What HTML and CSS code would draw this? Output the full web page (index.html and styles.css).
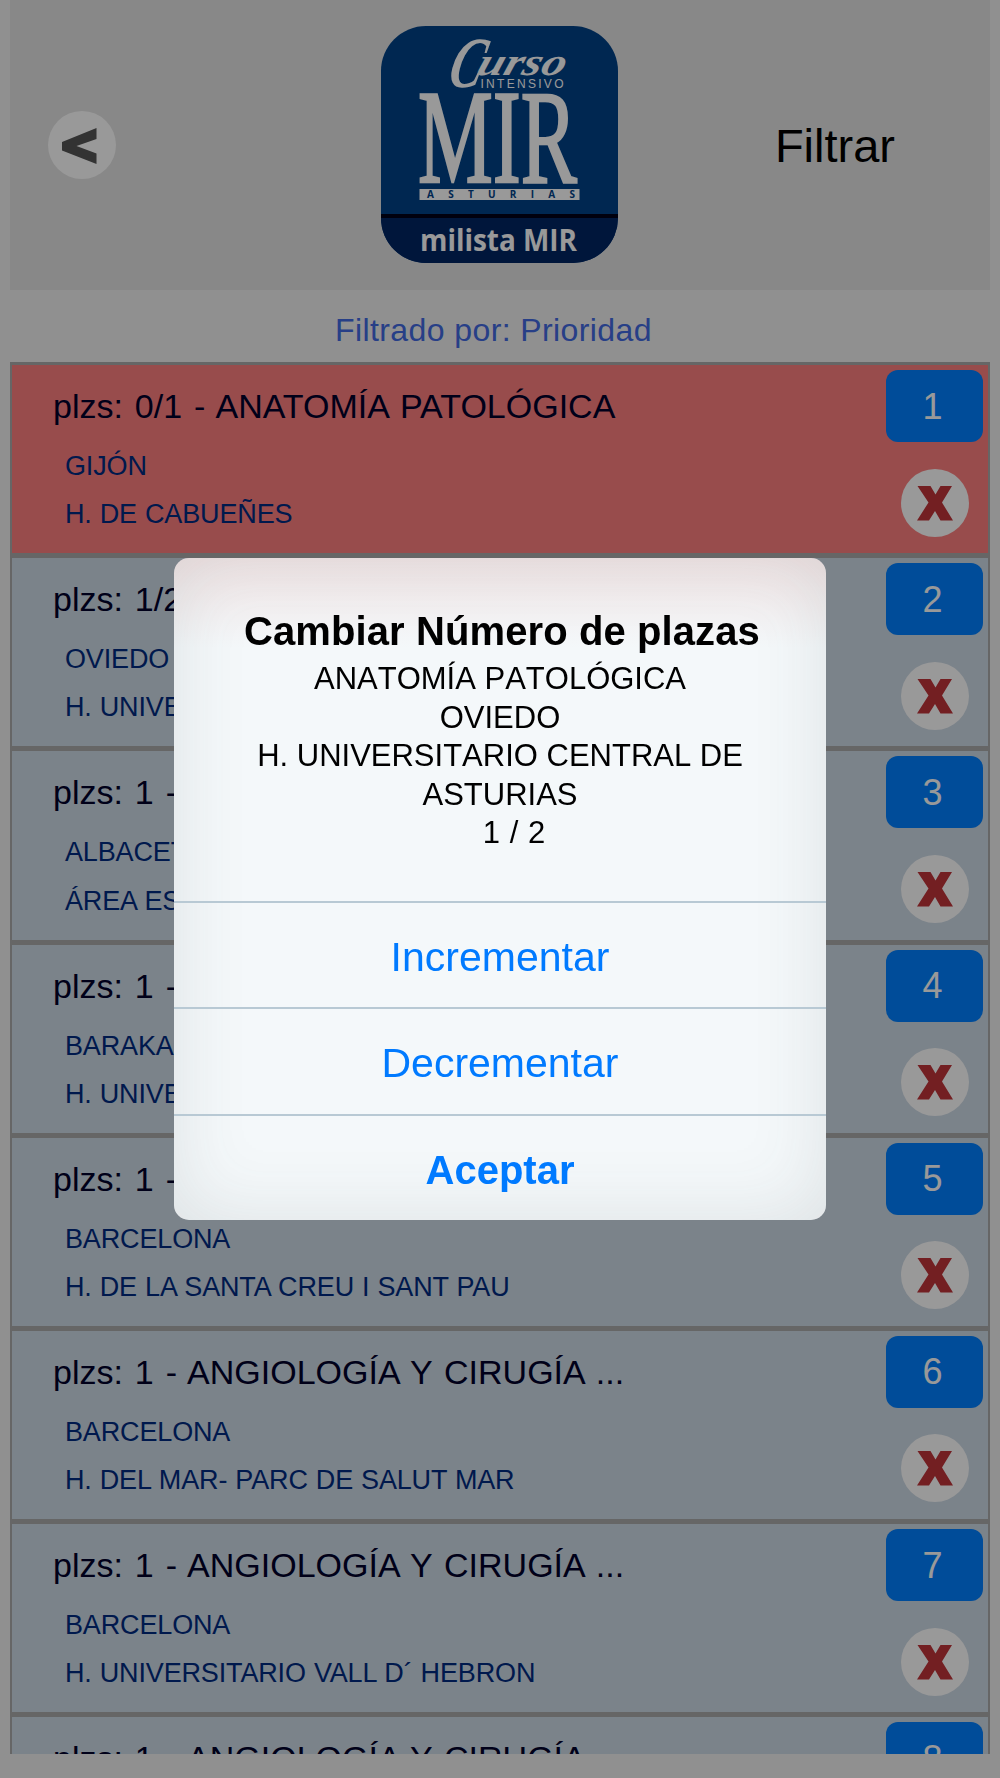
FILE: index.html
```html
<!DOCTYPE html>
<html lang="es">
  <head>
    <meta charset="UTF-8" />
    <meta name="viewport" content="width=device-width, initial-scale=1.0" />
    <title>milista MIR</title>
    <link rel="stylesheet" href="styles.css">
  </head>
  <body>
    <svg width="0" height="0" class="sprite">
      <symbol id="icon-delete" viewBox="0 0 68 68">
        <circle cx="34" cy="34" r="34" fill="#fff" />
        <path d="M16.500 17H29.500L34.500 25.500L39.500 17H51L41 33.500L52 51.500H39.500L34 42L28 51.500H16L27.500 33.500Z" fill="#c0343a" />
      </symbol>
    </svg>

    <div class="page">
      <header class="header">
        <button class="back" aria-label="Volver">
          <svg viewBox="0 0 68 68">
            <circle cx="34" cy="34" r="34" fill="#fff" />
            <path d="M48.500 17V28L28.500 35L48.500 42.500V53L14 39.500V31Z" fill="#555" />
          </svg>
        </button>
        <svg class="logo" viewBox="0 0 237 237">
          <clipPath id="logoShape">
            <rect width="237" height="237" rx="45" />
          </clipPath>
          <g clip-path="url(#logoShape)">
            <rect width="237" height="237" fill="#004187" />
            <rect y="189" width="237" height="48" fill="#002563" />
            <rect y="188" width="237" height="4" fill="#000018" />
          </g>
          <g fill="#fff">
            <text class="logo-script" transform="translate(65 61) skewX(-14)" font-size="72" textLength="33" lengthAdjust="spacingAndGlyphs">C</text>
            <text class="logo-script" transform="translate(94 49) skewX(-18)" font-size="39" textLength="88" lengthAdjust="spacingAndGlyphs">urso</text>
            <text class="logo-sans" x="99.500" y="62" font-size="12" textLength="83">INTENSIVO</text>
            <text class="logo-serif" x="37" y="155.500" font-size="134" textLength="159" lengthAdjust="spacingAndGlyphs">MIR</text>
            <rect x="38.500" y="163" width="160" height="11" />
            <text class="logo-open" x="39" y="225" font-size="29.500" textLength="157" lengthAdjust="spacingAndGlyphs">milista MIR</text>
          </g>
          <text class="logo-open" x="46" y="172" font-size="10" fill="#004187" textLength="148">ASTURIAS</text>
        </svg>
        <a class="filter" href="#">Filtrar</a>
      </header>

      <p class="filtered-by">Filtrado por: Prioridad</p>

      <ul class="list">
        <li class="row full">
          <div class="info">
            <h2>plzs: 0/1 - ANATOMÍA PATOLÓGICA</h2>
            <p>GIJÓN</p>
            <p>H. DE CABUEÑES</p>
          </div>
          <div class="actions">
            <button class="order">1</button>
            <svg class="delete"><use href="#icon-delete" /></svg>
          </div>
        </li>
        <li class="row">
          <div class="info">
            <h2>plzs: 1/2 - ANATOMÍA PATOLÓGICA</h2>
            <p>OVIEDO</p>
            <p>H. UNIVERSITARIO CENTRAL DE ASTURIAS</p>
          </div>
          <div class="actions">
            <button class="order">2</button>
            <svg class="delete"><use href="#icon-delete" /></svg>
          </div>
        </li>
        <li class="row">
          <div class="info">
            <h2>plzs: 1 - ANGIOLOGÍA Y CIRUGÍA ...</h2>
            <p>ALBACETE</p>
            <p>ÁREA ESPECIALIZADA</p>
          </div>
          <div class="actions">
            <button class="order">3</button>
            <svg class="delete"><use href="#icon-delete" /></svg>
          </div>
        </li>
        <li class="row">
          <div class="info">
            <h2>plzs: 1 - ANGIOLOGÍA Y CIRUGÍA ...</h2>
            <p>BARAKALDO</p>
            <p>H. UNIVERSITARIO</p>
          </div>
          <div class="actions">
            <button class="order">4</button>
            <svg class="delete"><use href="#icon-delete" /></svg>
          </div>
        </li>
        <li class="row">
          <div class="info">
            <h2>plzs: 1 - ANGIOLOGÍA Y CIRUGÍA ...</h2>
            <p>BARCELONA</p>
            <p>H. DE LA SANTA CREU I SANT PAU</p>
          </div>
          <div class="actions">
            <button class="order">5</button>
            <svg class="delete"><use href="#icon-delete" /></svg>
          </div>
        </li>
        <li class="row">
          <div class="info">
            <h2>plzs: 1 - ANGIOLOGÍA Y CIRUGÍA ...</h2>
            <p>BARCELONA</p>
            <p>H. DEL MAR- PARC DE SALUT MAR</p>
          </div>
          <div class="actions">
            <button class="order">6</button>
            <svg class="delete"><use href="#icon-delete" /></svg>
          </div>
        </li>
        <li class="row">
          <div class="info">
            <h2>plzs: 1 - ANGIOLOGÍA Y CIRUGÍA ...</h2>
            <p>BARCELONA</p>
            <p>H. UNIVERSITARIO VALL D´ HEBRON</p>
          </div>
          <div class="actions">
            <button class="order">7</button>
            <svg class="delete"><use href="#icon-delete" /></svg>
          </div>
        </li>
        <li class="row">
          <div class="info">
            <h2>plzs: 1 - ANGIOLOGÍA Y CIRUGÍA ...</h2>
          </div>
          <div class="actions">
            <button class="order">8</button>
          </div>
        </li>
      </ul>
    </div>

    <div class="overlay">
      <div class="alert" role="dialog">
        <div class="alert-body">
          <h1>Cambiar Número de plazas</h1>
          <p>ANATOMÍA PATOLÓGICA</p>
          <p>OVIEDO</p>
          <p>H. UNIVERSITARIO CENTRAL DE ASTURIAS</p>
          <p class="count">1 / 2</p>
        </div>
        <button class="alert-button">Incrementar</button>
        <button class="alert-button">Decrementar</button>
        <button class="alert-button accept">Aceptar</button>
      </div>
    </div>
  </body>
</html>
```
FILE: styles.css
```css
* {
  box-sizing: border-box;
  margin: 0;
  padding: 0;
}

body {
  height: 1778px;
  overflow: hidden;
  background-color: #f0f0f0;
  font-family: "Liberation Sans", Arial, sans-serif;
}

button {
  border: none;
  background: none;
  font-family: inherit;
}

.sprite {
  display: block;
}

.page {
  display: flex;
  flex-direction: column;
  height: 1754px;
  padding: 0 10px;
}

/* Header */
.header {
  display: grid;
  grid-template-columns: 1fr 237px 1fr;
  align-items: center;
  flex: none;
  height: 290px;
  background-color: #e3e3e3;
}

.back {
  width: 68px;
  height: 68px;
  margin-left: 38px;
}

.back svg,
.logo {
  display: block;
}

.logo {
  width: 237px;
  height: 237px;
  margin: 0 0 2px -0.500px;
}

.logo-script {
  font-family: "Liberation Serif", serif;
  font-style: italic;
  font-weight: bold;
}

.logo-serif {
  font-family: "Liberation Serif", serif;
  stroke: #fff;
  stroke-width: 2.500px;
}

.logo-open {
  font-family: "Open Sans", sans-serif;
  font-weight: bold;
}

.filter {
  justify-self: end;
  margin-right: 95px;
  color: #000;
  font-size: 47px;
  text-decoration: none;
}

.filtered-by {
  flex: none;
  height: 72px;
  padding-right: 13px;
  color: royalblue;
  font-size: 32px;
  line-height: 80px;
  letter-spacing: 0.4px;
  text-align: center;
}

/* List */
.list {
  display: grid;
  grid-auto-rows: 188.200px;
  align-content: start;
  gap: 5px;
  flex: 1;
  min-height: 0;
  overflow: hidden;
  padding: 3px 2px 0;
  background-color: #aaa;
  list-style: none;
}

.row {
  display: flex;
  justify-content: space-between;
  padding: 5px 5px 0 41px;
  background-color: #cddae6;
}

.row.full {
  background-color: #fd7f7f;
}

.info h2 {
  color: #00002a;
  font-size: 34px;
  font-weight: normal;
  line-height: 72px;
  word-spacing: 2.500px;
  white-space: nowrap;
}

.info p {
  padding-left: 12px;
  color: #002b80;
  font-size: 27px;
  line-height: 48.300px;
  letter-spacing: -0.150px;
  word-spacing: 0.700px;
  white-space: nowrap;
}

.actions {
  flex: none;
  width: 97px;
}

.order {
  display: block;
  width: 97px;
  height: 72px;
  padding: 1px 4px 0 0;
  border-radius: 12px;
  background-color: #007fff;
  color: #fff;
  font-size: 36px;
}

.delete {
  display: block;
  width: 68px;
  height: 68px;
  margin: 26.500px 0 0 15px;
}

/* Alert */
.overlay {
  position: fixed;
  top: 0;
  left: 0;
  display: flex;
  justify-content: center;
  align-items: center;
  width: 100%;
  height: 100%;
  background-color: rgba(0, 0, 0, 0.4);
}

.alert {
  width: 652px;
  height: 662px;
  overflow: hidden;
  border-radius: 15px;
  background: linear-gradient(rgba(240, 222, 222, 0.7), rgba(240, 228, 228, 0) 90px), #f4f8fa;
  box-shadow: inset 0 0 75px rgba(70, 80, 80, 0.13);
}

.alert-body {
  height: 343px;
  padding: 48px 70px 0;
  font-size: 31px;
  line-height: 38.600px;
  font-kerning: none;
  text-align: center;
}

.alert-body h1 {
  margin-bottom: 4px;
  font-size: 40px;
  line-height: 50px;
  letter-spacing: 0.1px;
  white-space: nowrap;
}

.alert-body .count {
  padding-left: 28px;
  word-spacing: 1px;
}

.alert-button {
  display: block;
  width: 100%;
  height: 106.300px;
  padding-top: 5px;
  border-top: 2px solid #b8c9d4;
  color: #007aff;
  font-size: 41px;
}

.alert-button.accept {
  font-size: 40px;
  font-weight: bold;
}
```
